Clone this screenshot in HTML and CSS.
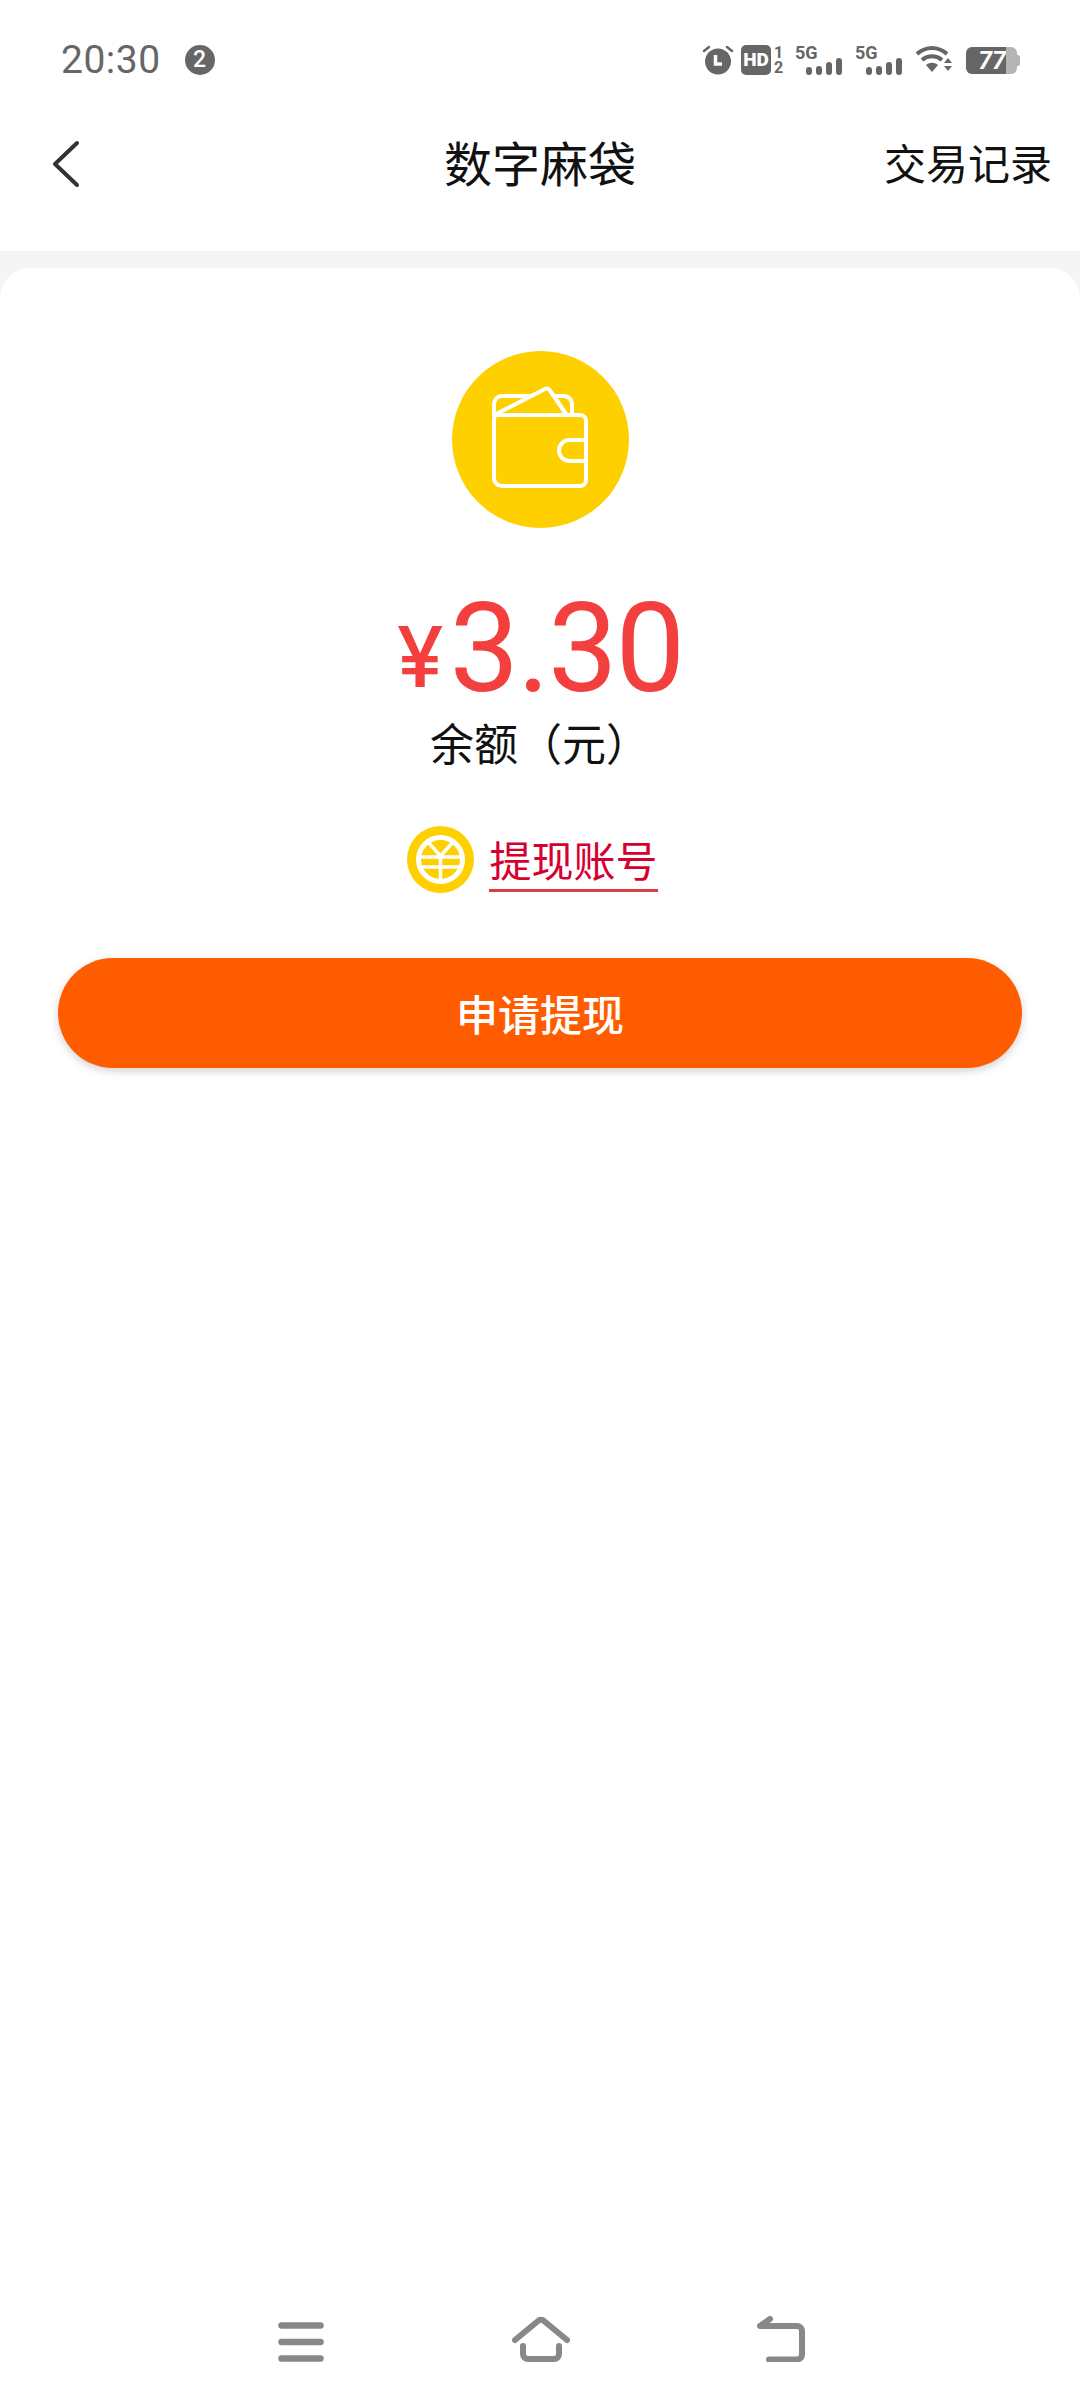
FILE: index.html
```html
<!DOCTYPE html>
<html lang="zh">
<head>
<meta charset="utf-8">
<title>数字麻袋</title>
<link rel="stylesheet" href="styles.css">
</head>
<body>
<div class="page">
  <div class="status">
    <div class="status-left">
      <span class="time">20:30</span>
      <span class="badge">2</span>
    </div>
    <div class="status-right">
      <svg class="ic-alarm" width="32" height="32" viewBox="0 0 32 32"><circle cx="16" cy="17.500" r="13" fill="#666"/><path d="M13.500 11v9h6.500" fill="none" stroke="#fff" stroke-width="3.500"/><path d="M2 7l5-4M30 7l-5-4" stroke="#666" stroke-width="2.500" stroke-linecap="round"/></svg>
      <span class="hd-wrap"><span class="hd">HD</span><span class="sims"><span>1</span><span>2</span></span></span>
      <span class="sig"><span class="g5">5G</span><svg class="bars" width="36" height="17" viewBox="0 0 36 17"><rect x="0" y="9" width="6" height="8" rx="3" fill="#666"/><rect x="10" y="8" width="6" height="9" rx="3" fill="#666"/><rect x="20" y="4" width="6" height="13" rx="3" fill="#666"/><rect x="30" y="0" width="6" height="17" rx="3" fill="#666"/></svg></span>
      <span class="sig"><span class="g5">5G</span><svg class="bars" width="36" height="17" viewBox="0 0 36 17"><rect x="0" y="9" width="6" height="8" rx="3" fill="#666"/><rect x="10" y="8" width="6" height="9" rx="3" fill="#666"/><rect x="20" y="4" width="6" height="13" rx="3" fill="#666"/><rect x="30" y="0" width="6" height="17" rx="3" fill="#666"/></svg></span>
      <svg class="ic-wifi" width="38" height="28" viewBox="0 0 38 28"><path d="M2 8C11 0 23 0 32 8M7 14C13 9 21 9 27 14" fill="none" stroke="#666" stroke-width="4"/><path d="M11 19c4-3 8-3 12 0l-6 7z" fill="#666"/><path d="M29 17l4-5 4 5zM29 20l4 5 4-5z" fill="#666"/></svg>
      <span class="battery"><span class="batt-fill">77</span><span class="batt-rest"></span><span class="batt-tip"></span></span>
    </div>
  </div>

  <header class="header">
    <div class="header-left">
      <svg class="ic-back" width="28" height="48" viewBox="0 0 28 48"><path d="M25 3L3 24l22 21" fill="none" stroke="#333" stroke-width="4" stroke-linecap="round" stroke-linejoin="round"/></svg>
    </div>
    <h1 class="title">数字麻袋</h1>
    <div class="header-right">交易记录</div>
  </header>

  <div class="band"></div>

  <main class="card">
    <div class="wallet">
      <svg width="100" height="100" viewBox="0 0 100 100"><g fill="none" stroke="#fff" stroke-width="4" stroke-linejoin="round" stroke-linecap="round"><path d="M4 25V14a8 8 0 0 1 8-8h62a8 8 0 0 1 8 8v11"/><path d="M8 23L55 -1a4 4 0 0 1 5 1.500L76 24" fill="#ffd000"/><path d="M4 29a4 4 0 0 1 4-4h82a6 6 0 0 1 6 6v59a6 6 0 0 1-6 6H12a8 8 0 0 1-8-8V29" fill="#ffd000"/><path d="M96 50H79.500a10.500 10.500 0 0 0 0 21H96"/></g></svg>
    </div>
    <div class="amount"><span class="yen">¥</span><span class="value">3.30</span></div>
    <div class="label">余额（元）</div>
    <div class="account">
      <svg class="ic-ecny" width="67" height="67" viewBox="0 0 67 67"><circle cx="33.500" cy="33.500" r="33.500" fill="#ffd000"/><circle cx="33.500" cy="33.500" r="22" fill="#ffd000" stroke="#fff" stroke-width="5"/><path d="M20 15l13.500 15L47 15M12 31h43M14 41h39M33.500 30v26" fill="none" stroke="#fff" stroke-width="3.500"/></svg>
      <span class="account-text">提现账号</span>
    </div>
    <button class="cta">申请提现</button>
    <nav class="nav">
      <svg width="46" height="40" viewBox="0 0 46 40"><path d="M3.500 3.500h39M3.500 20h39M3.500 36.500h39" stroke="#888" stroke-width="6.500" stroke-linecap="round"/></svg>
      <svg width="58" height="46" viewBox="0 0 58 46"><path d="M3 24L26 5a4 4 0 0 1 6 0L55 24" fill="none" stroke="#888" stroke-width="6" stroke-linecap="round" stroke-linejoin="round"/><path d="M11 30v8a5 5 0 0 0 5 5h26a5 5 0 0 0 5-5v-8" fill="none" stroke="#888" stroke-width="6" stroke-linecap="round"/></svg>
      <svg width="48" height="46" viewBox="0 0 48 46"><path d="M13 3L3 10h37a5 5 0 0 1 5 5v23.500a5 5 0 0 1-5 5H12" fill="none" stroke="#888" stroke-width="6" stroke-linecap="round" stroke-linejoin="round"/></svg>
    </nav>
  </main>
</div>
</body>
</html>
```
FILE: styles.css
```css
* { box-sizing: border-box; }
html, body { margin: 0; padding: 0; background: #fff; }
body { font-family: "Noto Sans CJK SC", Roboto, sans-serif; color: #000; }
.page { width: 1080px; height: 2400px; display: flex; flex-direction: column; overflow: hidden; background: #fff; }

.status { height: 76px; padding: 44px 60px 0 61px; display: flex; justify-content: space-between; align-items: center; }
.status-left { display: flex; align-items: center; gap: 24px; height: 32px; }
.time { font: 400 39px/32px Roboto, sans-serif; color: #666; letter-spacing: .5px; }
.badge { width: 30px; height: 30px; border-radius: 50%; background: #666; color: #fff; font: 500 23px/30px Roboto, sans-serif; text-align: center; }
.status-right { display: flex; align-items: center; height: 32px; }
.ic-alarm { margin-right: 7px; flex: none; }
.hd-wrap { display: flex; align-items: stretch; width: 43px; margin-right: 11px; height: 30px; }
.hd { width: 30px; height: 30px; border-radius: 5px; background: #666; color: #fff; font: 900 19px/30px Roboto, sans-serif; text-align: center; }
.sims { display: flex; flex-direction: column; justify-content: space-between; margin-left: 3px; font: 700 16px/15px Roboto, sans-serif; color: #666; }
.sig { position: relative; display: block; width: 47px; height: 30px; margin-right: 13px; }
.g5 { display: block; font: 700 18px/16px Roboto, sans-serif; color: #666; }
.bars { position: absolute; right: 0; bottom: 0; }
.ic-wifi { margin-right: 13px; flex: none; }
.battery { display: flex; width: 54px; height: 27px; }
.batt-fill { width: 40px; height: 27px; background: #666; border-radius: 6px 0 0 6px; color: #fff; font: italic 700 25px/27px Roboto, sans-serif; text-align: right; padding-right: 0; }
.batt-rest { width: 11px; height: 27px; background: #b4b4b4; border-radius: 0 6px 6px 0; }
.batt-tip { width: 3px; height: 11px; margin-top: 8px; background: #b4b4b4; border-radius: 0 2px 2px 0; }

.header { height: 175px; display: grid; grid-template-columns: 1fr auto 1fr; align-items: center; padding: 0 28px; }
.header-left { display: flex; align-items: center; padding-left: 24px; }
.ic-back { display: block; }
.title { margin: 0 0 6px; font-size: 48px; font-weight: 400; line-height: 60px; color: #111; }
.header-right { justify-self: end; margin-bottom: 3px; font-size: 42px; line-height: 60px; color: #111; }

.band { height: 17px; background: #f5f5f5; flex: none; }
.card { flex: 1; position: relative; display: flex; flex-direction: column; align-items: center; background: #fff; padding-top: 83px; }
.card::before { content: ""; position: absolute; left: 0; top: 0; width: 30px; height: 30px; background: radial-gradient(circle at 30px 30px, transparent 29.500px, #f5f5f5 30px); }
.card::after { content: ""; position: absolute; right: 0; top: 0; width: 30px; height: 30px; background: radial-gradient(circle at 0 30px, transparent 29.500px, #f5f5f5 30px); }

.wallet { width: 177px; height: 177px; border-radius: 50%; background: #ffd000; display: flex; align-items: center; justify-content: center; }
.wallet svg { overflow: visible; }

.amount { margin-top: 56px; color: #f43f3f; height: 130px; line-height: 130px; font-family: Roboto, sans-serif; white-space: nowrap; }
.yen { font: 500 84px/130px Inter, sans-serif; margin-right: 6px; vertical-align: 4px; }
.value { font-size: 124px; letter-spacing: -2px; }
.label { margin-top: 0; font-size: 44px; line-height: 56px; color: #111; }

.account { display: flex; align-items: center; gap: 15px; margin: 56px 15px 0 0; }
.ic-ecny { flex: none; }
.account-text { display: block; font-size: 42px; line-height: 56px; color: #d6002f; border-bottom: 3px solid #d94040; padding-bottom: 2px; margin-top: 4px; }

.cta { width: 964px; height: 110px; margin-top: 65px; border: 0; border-radius: 55px; background: #ff5c00; color: #fff; font: 500 42px/110px "Noto Sans CJK SC", sans-serif; box-shadow: 0 3px 8px rgba(0,0,0,.18); padding: 0; }

.nav { position: absolute; left: 278px; right: 275px; bottom: 38px; display: flex; justify-content: space-between; align-items: flex-end; }
.nav svg { display: block; }
```
